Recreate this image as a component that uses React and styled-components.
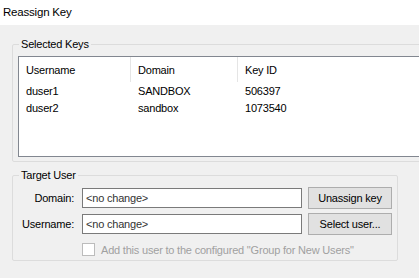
import React from 'react'
import styled, { createGlobalStyle } from 'styled-components'

const Global = createGlobalStyle`
  html, body {
    margin: 0;
    padding: 0;
    background: #f0f0f0;
    overflow: hidden;
  }
  body {
    font-family: "Liberation Sans", Arial, sans-serif;
    font-size: 11px;
    letter-spacing: -0.2px;
    color: #000;
  }
`

const TitleBar = styled.div`
  height: 25px;
  background: #fff;
  padding-left: 3px;
  line-height: 25px;
  font-size: 11.5px;
`

const Content = styled.div`
  padding-left: 12px;
  width: 480px;
`

const Group = styled.fieldset`
  margin: ${p => p.$top}px 0 0 0;
  width: ${p => p.$width}px;
  box-sizing: border-box;
  border: 1px solid #dcdcdc;
  border-radius: 2px;
  padding: 4px ${p => p.$right}px 4px ${p => p.$left}px;
`

const Legend = styled.legend`
  padding: 0 2px;
  margin-left: ${p => 6 - p.$left}px;
  line-height: 15px;
`

const List = styled.div`
  height: 99px;
  background: #fff;
  border: 1px solid #828790;
`

const Row = styled.div`
  display: grid;
  grid-template-columns: 112px 107px 1fr;
  height: ${p => (p.$head ? 25 : 17)}px;
  align-items: center;
`

const Cell = styled.div`
  padding-left: 7px;
  height: 100%;
  display: flex;
  align-items: center;
  border-right: ${p => (p.$sep ? '1px solid #e5e5e5' : 'none')};
  white-space: nowrap;
`

const Form = styled.div`
  display: grid;
  grid-template-columns: 52px 221px 83px;
  column-gap: 7px;
  row-gap: 4px;
  align-items: center;
`

const Label = styled.label`
  text-align: right;
  white-space: nowrap;
`

const Field = styled.div`
  height: 20px;
  box-sizing: border-box;
  margin-left: 1px;
  background: #fff;
  border: 1px solid #7a7a7a;
  padding-left: 3px;
  line-height: 18px;
  color: #333;
`

const Button = styled.button`
  height: 22px;
  margin-left: -1px;
  box-sizing: border-box;
  background: #e1e1e1;
  border: 1px solid #adadad;
  font-family: inherit;
  font-size: 11px;
  letter-spacing: -0.2px;
  color: #000;
  padding: 0;
`

const CheckRow = styled.div`
  grid-column: 2 / 4;
  margin-left: 1px;
  margin-top: 4px;
  display: flex;
  align-items: center;
  gap: 6px;
  color: #a0a0a0;
  white-space: nowrap;
`

const Box = styled.span`
  width: 13px;
  height: 13px;
  box-sizing: border-box;
  border: 1px solid #bcbcbc;
  background: #fff;
  flex: none;
`

const keys = [
  { user: 'duser1', domain: 'SANDBOX', id: '506397' },
  { user: 'duser2', domain: 'sandbox', id: '1073540' },
]

export default function App() {
  return (
    <>
      <Global />
      <TitleBar>Reassign Key</TitleBar>
      <Content>
        <Group $top={12} $width={440} $left={5} $right={5}>
          <Legend $left={5}>Selected Keys</Legend>
          <List>
            <Row $head>
              <Cell $sep>Username</Cell>
              <Cell $sep>Domain</Cell>
              <Cell>Key ID</Cell>
            </Row>
            {keys.map(k => (
              <Row key={k.id}>
                <Cell>{k.user}</Cell>
                <Cell>{k.domain}</Cell>
                <Cell>{k.id}</Cell>
              </Row>
            ))}
          </List>
        </Group>
        <Group $top={6} $width={386} $left={9} $right={5}>
          <Legend $left={9}>Target User</Legend>
          <Form>
            <Label>Domain:</Label>
            <Field>&lt;no change&gt;</Field>
            <Button>Unassign key</Button>
            <Label>Username:</Label>
            <Field>&lt;no change&gt;</Field>
            <Button>Select user...</Button>
            <CheckRow>
              <Box />
              Add this user to the configured "Group for New Users"
            </CheckRow>
          </Form>
        </Group>
      </Content>
    </>
  )
}
